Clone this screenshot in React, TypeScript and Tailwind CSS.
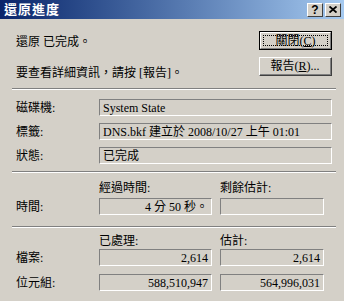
import React from 'react';

const font = { fontFamily: '"Liberation Serif", "Noto Sans CJK TC", serif' };

const Field: React.FC<{ children?: React.ReactNode; right?: boolean; className?: string }> = ({ children, right, className }) => (
  <div
    className={`border-t border-l border-[#808080] border-b border-r border-b-white border-r-white h-[17px] flex items-center text-[12px] leading-none text-black px-[3px] ${right ? 'justify-end' : ''} ${className || ''}`}
  >
    {children}
  </div>
);

const Separator: React.FC = () => (
  <div className="mx-[-4px]">
    <div className="h-px bg-[#808080]" />
    <div className="h-px bg-white" />
  </div>
);

const TitleButton: React.FC<{ children: React.ReactNode }> = ({ children }) => (
  <div className="w-[16px] h-[14px] bg-[#d4d0c8] border-t border-l border-white border-b border-r border-b-[#404040] border-r-[#404040] flex items-center justify-center text-[12px] font-bold leading-none text-black" style={{ fontFamily: '"Liberation Sans", sans-serif' }}>
    {children}
  </div>
);

export default function App() {
  return (
    <div className="w-[344px] h-[301px] bg-[#d4d0c8] overflow-hidden select-none" style={font}>
      {/* title bar */}
      <div className="h-[19px] bg-gradient-to-r from-[#0a246a] to-[#a6caf0] flex items-center justify-between pl-[4px] pr-[3px]">
        <span className="text-white font-bold text-[13px] leading-none tracking-[1px]">還原進度</span>
        <div className="flex gap-[2px]">
          <TitleButton>?</TitleButton>
          <TitleButton>
            <svg width="8" height="7" viewBox="0 0 8 7">
              <path d="M0.5 0.5 L7.5 6.5 M7.5 0.5 L0.5 6.5" stroke="black" strokeWidth="1.8" fill="none" />
            </svg>
          </TitleButton>
        </div>
      </div>

      <div className="pl-[16px] pr-[12px] text-[12px] text-black">
        {/* status + buttons */}
        <div className="mt-[12px] flex justify-between items-center h-[19px]">
          <span className="leading-none pt-[2px]">還原 已完成。</span>
          <button className="w-[73px] h-[19px] border border-black bg-[#d4d0c8] p-0">
            <div className="h-full border-t border-l border-white border-b border-r border-b-[#808080] border-r-[#808080] p-[2px]">
              <div className="h-full border border-dotted border-black flex items-center justify-center leading-none text-[12px]">
                關閉(<span className="underline">C</span>)
              </div>
            </div>
          </button>
        </div>
        <div className="mt-[7px] flex justify-between h-[19px]">
          <span className="leading-none pt-[10px]">要查看詳細資訊，請按 [報告]。</span>
          <button className="w-[73px] h-[19px] bg-[#d4d0c8] border-t border-l border-white border-b border-r border-b-[#404040] border-r-[#404040] p-0">
            <div className="h-full border-b border-r border-[#808080] flex items-center justify-center leading-none text-[12px]">
              報告(<span className="underline">R</span>)...
            </div>
          </button>
        </div>

        <div className="mt-[12px]">
          <Separator />
        </div>

        {/* info fields */}
        <div className="mt-[9px] flex flex-col gap-[7px]">
          {[
            ['磁碟機:', 'System State'],
            ['標籤:', 'DNS.bkf 建立於 2008/10/27 上午 01:01'],
            ['狀態:', '已完成'],
          ].map(([label, value]) => (
            <div key={label} className="flex items-center">
              <span className="w-[83px] leading-none">{label}</span>
              <Field className="flex-1">{value}</Field>
            </div>
          ))}
        </div>

        <div className="mt-[7px]">
          <Separator />
        </div>

        {/* time */}
        <div className="mt-[9px] grid grid-cols-[83px_113px_112px] gap-x-0">
          <span />
          <span className="leading-none h-[16px]">經過時間:</span>
          <span className="leading-none h-[16px] pl-[8px]">剩餘估計:</span>
          <span className="leading-none flex items-center">時間:</span>
          <Field right className="h-[16px]">4 分 50 秒。</Field>
          <div className="pl-[8px]">
            <Field className="h-[16px]" />
          </div>
        </div>

        <div className="mt-[11px]">
          <Separator />
        </div>

        {/* files */}
        <div className="mt-[7px] grid grid-cols-[83px_113px_112px] gap-y-[8px]">
          <span />
          <span className="leading-none h-[14px] -mb-[8px]">已處理:</span>
          <span className="leading-none h-[14px] -mb-[8px] pl-[8px]">估計:</span>
          <span className="leading-none flex items-center">檔案:</span>
          <Field right>2,614</Field>
          <div className="pl-[8px]">
            <Field right>2,614</Field>
          </div>
          <span className="leading-none flex items-center">位元組:</span>
          <Field right>588,510,947</Field>
          <div className="pl-[8px]">
            <Field right>564,996,031</Field>
          </div>
        </div>
      </div>
    </div>
  );
}
